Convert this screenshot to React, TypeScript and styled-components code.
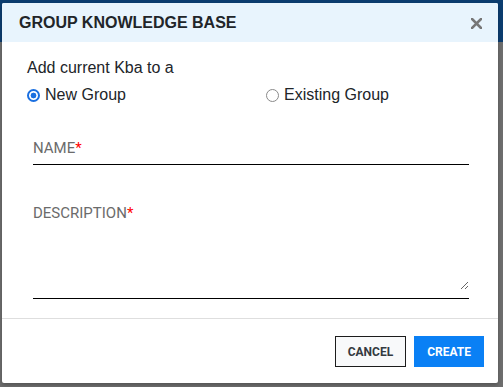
import { useState } from 'react';
import { createGlobalStyle, styled } from 'styled-components';

const GlobalStyle = createGlobalStyle`
  html, body {
    margin: 0;
    padding: 0;
  }
  body {
    background: linear-gradient(#0c3d70 0 42px, #6e6e6e 42px);
    font-family: "Liberation Sans", Arial, sans-serif;
  }
`;

const CloseIcon = () => (
  <svg width="11" height="11" viewBox="0 0 11 11">
    <path d="M1 1 L10 10 M10 1 L1 10" stroke="#777" strokeWidth="2.6" strokeLinecap="square" />
  </svg>
);

const App = () => {
  const [target, setTarget] = useState<'new' | 'existing'>('new');
  const [name, setName] = useState('');
  const [description, setDescription] = useState('');

  return (
    <S.Page>
      <GlobalStyle />
      <S.Modal>
        <S.Header>
          <h2>GROUP KNOWLEDGE BASE</h2>
          <S.CloseBtn type="button" aria-label="close">
            <CloseIcon />
          </S.CloseBtn>
        </S.Header>

        <S.Body>
          <S.Intro>Add current Kba to a</S.Intro>
          <S.RadioRow>
            <S.RadioLabel>
              <S.Radio
                type="radio"
                name="target"
                checked={target === 'new'}
                onChange={() => setTarget('new')}
              />
              New Group
            </S.RadioLabel>
            <S.RadioLabel>
              <S.Radio
                type="radio"
                name="target"
                checked={target === 'existing'}
                onChange={() => setTarget('existing')}
              />
              Existing Group
            </S.RadioLabel>
          </S.RadioRow>

          <S.Field $top={36}>
            <S.FieldLabel htmlFor="kb-name">
              NAME<span>*</span>
            </S.FieldLabel>
            <S.NameInput id="kb-name" value={name} onChange={(e) => setName(e.target.value)} />
          </S.Field>

          <S.Field $top={40}>
            <S.FieldLabel htmlFor="kb-desc">
              DESCRIPTION<span>*</span>
            </S.FieldLabel>
            <S.DescInput
              id="kb-desc"
              value={description}
              onChange={(e) => setDescription(e.target.value)}
            />
          </S.Field>
        </S.Body>

        <S.Footer>
          <S.Button type="button" $variant="outline">
            CANCEL
          </S.Button>
          <S.Button type="button" $variant="primary">
            CREATE
          </S.Button>
        </S.Footer>
      </S.Modal>
    </S.Page>
  );
};

const S = {
  Page: styled.div`
    box-sizing: border-box;
    width: 503px;
    height: 387px;
    padding: 3px 5px 0 2px;
  `,

  Modal: styled.div`
    display: flex;
    flex-direction: column;

    width: 496px;
    height: 380px;

    background: #fff;
    border-radius: 2px;
    box-shadow: 0 2px 4px rgba(0, 0, 0, 0.25);
    overflow: hidden;
  `,

  Header: styled.header`
    display: flex;
    flex-shrink: 0;
    align-items: center;
    justify-content: space-between;

    height: 39px;
    padding: 0 16px 0 17px;
    box-sizing: border-box;

    background: #e8f4fd;

    & > h2 {
      margin: 0;
      color: #212529;
      font: 700 16px/18px "Liberation Sans", Arial, sans-serif;
    }
  `,

  CloseBtn: styled.button`
    display: flex;
    padding: 0;
    margin-top: 1px;

    background: none;
    border: none;
    cursor: pointer;
  `,

  Body: styled.section`
    display: flex;
    flex-direction: column;
    flex-shrink: 0;

    padding: 17px 29px 19px 25px;
  `,

  Intro: styled.p`
    margin: 0;
    color: #212529;
    font: 400 16px/18px "Liberation Sans", Arial, sans-serif;
  `,

  RadioRow: styled.div`
    display: grid;
    grid-template-columns: 239px 1fr;
    margin-top: 9px;
  `,

  RadioLabel: styled.label`
    display: flex;
    align-items: center;
    gap: 5px;

    color: #212529;
    font: 400 16px/18px "Liberation Sans", Arial, sans-serif;
    cursor: pointer;
  `,

  Radio: styled.input`
    appearance: none;
    box-sizing: border-box;
    width: 13px;
    height: 13px;
    margin: 0;

    border: 1.5px solid #8a8a8a;
    border-radius: 50%;
    background: #fff;

    &:checked {
      border: 2px solid #1a6fe0;
      background: radial-gradient(circle, #1a6fe0 0 2.6px, #fff 3.2px);
    }
  `,

  Field: styled.div<{ $top: number }>`
    display: flex;
    flex-direction: column;

    margin: ${({ $top }) => $top}px 0 0 6px;
    padding-bottom: 8px;

    border-bottom: 1px solid #000;
  `,

  FieldLabel: styled.label`
    color: #6b6b6b;
    font: 400 15px/16px Roboto, "Liberation Sans", sans-serif;

    & > span {
      color: #f00;
    }
  `,

  NameInput: styled.input`
    height: 0;
    padding: 0;
    border: none;
    outline: none;
  `,

  DescInput: styled.textarea`
    height: 69px;
    padding: 0;
    box-sizing: border-box;

    border: none;
    outline: none;
    resize: vertical;

    font: 400 14px/16px Roboto, sans-serif;
  `,

  Footer: styled.footer`
    display: flex;
    flex-shrink: 0;
    justify-content: flex-end;
    gap: 8px;

    margin-top: auto;
    padding: 17px 14px 16px 0;
    border-top: 1px solid #dedede;
  `,

  Button: styled.button<{ $variant: 'outline' | 'primary' }>`
    height: 31px;
    padding: 0 12px;

    border: 1px solid ${({ $variant }) => ($variant === 'primary' ? '#0a80f5' : '#1c1c1c')};
    border-radius: 0;
    background: ${({ $variant }) => ($variant === 'primary' ? '#0a80f5' : '#f8f9fa')};
    color: ${({ $variant }) => ($variant === 'primary' ? '#fff' : '#343a40')};

    font: 700 12px/14px Roboto, "Liberation Sans", sans-serif;
    cursor: pointer;
  `,
};

export default App;
